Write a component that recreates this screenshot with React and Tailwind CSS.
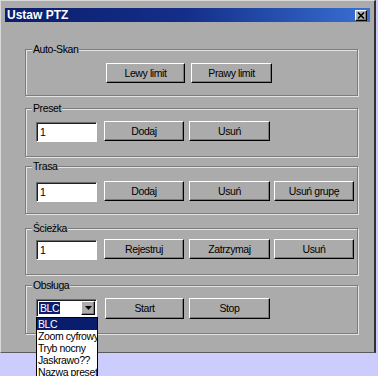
const raised =
  'border border-t-white border-l-white border-r-black border-b-black shadow-[inset_-1px_-1px_0_#7a7a7a]';
const sunken =
  'border border-t-[#6a6a6a] border-l-[#6a6a6a] border-r-white border-b-white shadow-[inset_1px_1px_0_#202020]';

export default function App() {
  return (
    <div className="w-[378px] h-[376px] bg-[#ccccff] text-[10.5px] tracking-[-0.4px] text-black font-['Liberation_Sans',Arial,sans-serif] overflow-hidden">
      <div className="relative w-[376px] h-[353px] bg-[#ababab] pt-[7px] px-[4px] border-t border-l border-t-[#d8d8d8] border-l-[#d8d8d8] border-r-2 border-b border-r-[#303030] border-b-[#5a5a5a]">
        {/* pasek tytułu */}
        <div className="h-[14px] flex items-center justify-between bg-gradient-to-r from-[#0a1d6c] via-[#142f8a] to-[#3a70d4] pl-[2px] pr-[3px]">
          <span className="text-white font-bold text-[12px] tracking-normal leading-none">Ustaw PTZ</span>
          <span className={`w-[12px] h-[11px] bg-[#b4b4b4] flex items-center justify-center ${raised}`}>
            <svg width="8" height="7" viewBox="0 0 8 7">
              <path d="M1 0.5 L7 6.5 M7 0.5 L1 6.5" stroke="#000" strokeWidth="1.6" />
            </svg>
          </span>
        </div>

        <div className="pl-[20px]">
          <Group label="Auto-Skan" className="mt-[27px] h-[47px] pt-[13px] pl-[80px]">
            <div className="flex gap-[6px]">
              <Btn w="w-[79px]">Lewy limit</Btn>
              <Btn w="w-[81px]">Prawy limit</Btn>
            </div>
          </Group>

          <Group label="Preset" className="mt-[12px] h-[49px] pt-[12px] pl-[10px]">
            <div className="flex">
              <Field />
              <div className="flex ml-[7px] gap-[5px]">
                <Btn w="w-[80px]">Dodaj</Btn>
                <Btn w="w-[81px]">Usuń</Btn>
              </div>
            </div>
          </Group>

          <Group label="Trasa" className="mt-[9px] h-[48px] pt-[14px] pl-[10px]">
            <div className="flex">
              <Field />
              <div className="flex ml-[7px] gap-[5px]">
                <Btn w="w-[80px]">Dodaj</Btn>
                <Btn w="w-[81px]">Usuń</Btn>
              </div>
              <div className="ml-[4px]">
                <Btn w="w-[80px]">Usuń grupę</Btn>
              </div>
            </div>
          </Group>

          <Group label="Ścieżka" className="mt-[14px] h-[47px] pt-[10px] pl-[10px]">
            <div className="flex">
              <Field />
              <div className="flex ml-[7px] gap-[5px]">
                <Btn w="w-[80px]">Rejestruj</Btn>
                <Btn w="w-[81px]">Zatrzymaj</Btn>
              </div>
              <div className="ml-[4px]">
                <Btn w="w-[80px]">Usuń</Btn>
              </div>
            </div>
          </Group>

          <Group label="Obsługa" className="mt-[10px] h-[49px] pt-[13px] pl-[10px]">
            <div className="flex">
              <Combo />
              <div className="flex ml-[8px] mt-[-1px] gap-[5px]">
                <Btn w="w-[79px]" h="h-[21px]">Start</Btn>
                <Btn w="w-[81px]" h="h-[21px]">Stop</Btn>
              </div>
            </div>
          </Group>
        </div>
      </div>
    </div>
  );
}

function Group({ label, className, children }) {
  return (
    <div className={`relative w-[333px] border border-[#7c7c7c] shadow-[inset_1px_1px_0_#e4e4e4,1px_1px_0_#e4e4e4] ${className}`}>
      <span className="absolute left-[6px] top-[-8px] px-[1px] bg-[#ababab] leading-[14px]">{label}</span>
      {children}
    </div>
  );
}

function Btn({ w, h = 'h-[20px]', children }) {
  return (
    <div className={`${w} ${h} bg-[#ababab] flex items-center justify-center leading-none ${raised}`}>
      {children}
    </div>
  );
}

function Field() {
  return (
    <div className={`w-[61px] h-[20px] mt-[1px] bg-white flex items-center pl-[3px] leading-none ${sunken}`}>
      1
    </div>
  );
}

function Combo() {
  const items = ['BLC', 'Zoom cyfrowy', 'Tryb nocny', 'Jaskrawo??', 'Nazwa presetu'];
  return (
    <div className="relative">
      <div className={`w-[61px] h-[18px] bg-white flex items-center pl-[2px] pr-[1px] ${sunken}`}>
        <span className="bg-[#0a1d6c] text-white leading-[12px] px-[1px]">BLC</span>
        <span className={`ml-auto w-[14px] h-[14px] bg-[#ababab] flex items-center justify-center ${raised}`}>
          <svg width="7" height="4" viewBox="0 0 7 4">
            <path d="M0 0 H7 L3.5 4 Z" fill="#000" />
          </svg>
        </span>
      </div>
      <div className="absolute left-0 top-[18px] w-[62px] h-[61px] bg-white border border-black overflow-hidden">
        {items.map((it, i) => (
          <div
            key={it}
            className={`h-[12px] leading-[12px] pl-[1px] whitespace-nowrap ${i === 0 ? 'bg-[#0a1d6c] text-white' : ''}`}
          >
            {it}
          </div>
        ))}
      </div>
    </div>
  );
}
